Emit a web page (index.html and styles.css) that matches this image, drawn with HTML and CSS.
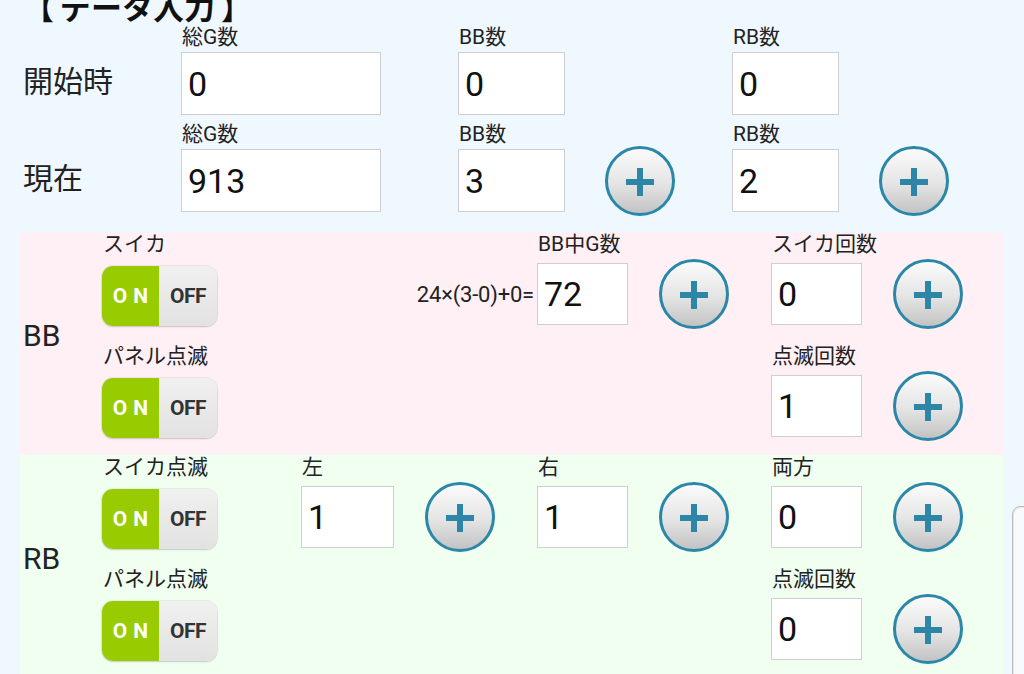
FILE: index.html
```html
<!DOCTYPE html>
<html lang="ja">
<head>
<meta charset="utf-8">
<title>データ入力</title>
<link rel="stylesheet" href="styles.css">
</head>
<body>
<div class="page">
  <h1 class="title"><span class="br-open">【</span>データ入力<span class="br-close">】</span></h1>

  <div class="top-row first">
    <div class="row-label">開始時</div>
    <div class="field">
      <div class="flabel">総G数</div>
      <div class="fbody"><input class="num wide" value="0"></div>
    </div>
    <div class="field">
      <div class="flabel">BB数</div>
      <div class="fbody"><input class="num mid" value="0"></div>
    </div>
    <div class="field">
      <div class="flabel">RB数</div>
      <div class="fbody"><input class="num mid" value="0"></div>
    </div>
  </div>

  <div class="top-row second">
    <div class="row-label">現在</div>
    <div class="field">
      <div class="flabel">総G数</div>
      <div class="fbody"><input class="num wide" value="913"></div>
    </div>
    <div class="field">
      <div class="flabel">BB数</div>
      <div class="fbody"><input class="num mid" value="3"><button class="plus top-plus"><svg viewBox="0 0 28 28" width="28" height="28"><rect x="0" y="11" width="28" height="6" fill="#2d86a5"/><rect x="11" y="0" width="6" height="28" fill="#2d86a5"/></svg></button></div>
    </div>
    <div class="field">
      <div class="flabel">RB数</div>
      <div class="fbody"><input class="num mid" value="2"><button class="plus top-plus"><svg viewBox="0 0 28 28" width="28" height="28"><rect x="0" y="11" width="28" height="6" fill="#2d86a5"/><rect x="11" y="0" width="6" height="28" fill="#2d86a5"/></svg></button></div>
    </div>
  </div>

  <section class="bonus bb">
    <div class="bonus-label">BB</div>

    <div class="cell c2 r1">
      <div class="clabel">スイカ</div>
      <div class="cbody"><div class="toggle"><span class="on">ON</span><span class="off">OFF</span></div></div>
    </div>
    <div class="formula c3 r1">24×(3-0)+0=</div>
    <div class="cell c4 r1">
      <div class="clabel">BB中G数</div>
      <div class="cbody"><input class="num small" value="72"><button class="plus"><svg viewBox="0 0 28 28" width="28" height="28"><rect x="0" y="11" width="28" height="6" fill="#2d86a5"/><rect x="11" y="0" width="6" height="28" fill="#2d86a5"/></svg></button></div>
    </div>
    <div class="cell c5 r1">
      <div class="clabel">スイカ回数</div>
      <div class="cbody"><input class="num small" value="0"><button class="plus"><svg viewBox="0 0 28 28" width="28" height="28"><rect x="0" y="11" width="28" height="6" fill="#2d86a5"/><rect x="11" y="0" width="6" height="28" fill="#2d86a5"/></svg></button></div>
    </div>

    <div class="cell c2 r2">
      <div class="clabel">パネル点滅</div>
      <div class="cbody"><div class="toggle"><span class="on">ON</span><span class="off">OFF</span></div></div>
    </div>
    <div class="cell c5 r2">
      <div class="clabel">点滅回数</div>
      <div class="cbody"><input class="num small" value="1"><button class="plus"><svg viewBox="0 0 28 28" width="28" height="28"><rect x="0" y="11" width="28" height="6" fill="#2d86a5"/><rect x="11" y="0" width="6" height="28" fill="#2d86a5"/></svg></button></div>
    </div>
  </section>

  <section class="bonus rb">
    <div class="bonus-label">RB</div>

    <div class="cell c2 r1">
      <div class="clabel">スイカ点滅</div>
      <div class="cbody"><div class="toggle"><span class="on">ON</span><span class="off">OFF</span></div></div>
    </div>
    <div class="cell c3 r1">
      <div class="clabel">左</div>
      <div class="cbody"><input class="num left" value="1"><button class="plus"><svg viewBox="0 0 28 28" width="28" height="28"><rect x="0" y="11" width="28" height="6" fill="#2d86a5"/><rect x="11" y="0" width="6" height="28" fill="#2d86a5"/></svg></button></div>
    </div>
    <div class="cell c4 r1">
      <div class="clabel">右</div>
      <div class="cbody"><input class="num small" value="1"><button class="plus"><svg viewBox="0 0 28 28" width="28" height="28"><rect x="0" y="11" width="28" height="6" fill="#2d86a5"/><rect x="11" y="0" width="6" height="28" fill="#2d86a5"/></svg></button></div>
    </div>
    <div class="cell c5 r1">
      <div class="clabel">両方</div>
      <div class="cbody"><input class="num small" value="0"><button class="plus"><svg viewBox="0 0 28 28" width="28" height="28"><rect x="0" y="11" width="28" height="6" fill="#2d86a5"/><rect x="11" y="0" width="6" height="28" fill="#2d86a5"/></svg></button></div>
    </div>

    <div class="cell c2 r2">
      <div class="clabel">パネル点滅</div>
      <div class="cbody"><div class="toggle"><span class="on">ON</span><span class="off">OFF</span></div></div>
    </div>
    <div class="cell c5 r2">
      <div class="clabel">点滅回数</div>
      <div class="cbody"><input class="num small" value="0"><button class="plus"><svg viewBox="0 0 28 28" width="28" height="28"><rect x="0" y="11" width="28" height="6" fill="#2d86a5"/><rect x="11" y="0" width="6" height="28" fill="#2d86a5"/></svg></button></div>
    </div>
  </section>

  <div class="side-panel"></div>
</div>
</body>
</html>
```
FILE: styles.css
```css
html, body {
  margin: 0;
  padding: 0;
}
body {
  background: #f0f8ff;
  font-family: Roboto, "Noto Sans CJK JP", sans-serif;
  color: #222;
  width: 1024px;
  height: 674px;
  overflow: hidden;
}
.page {
  position: relative;
  width: 1024px;
  height: 674px;
  overflow: hidden;
}
.title {
  margin: -9px 0 -2px 23px;
  font-size: 31px;
  line-height: 36px;
  height: 36px;
  font-weight: bold;
  color: #111;
  white-space: nowrap;
}
.br-open {
  margin-right: 6px;
}
.br-close {
  margin-left: 6px;
}

/* top rows */
.top-row {
  display: grid;
  grid-template-columns: 181px 277px 274px 1fr;
}
.top-row.second {
  margin-top: 7px;
}
.row-label {
  padding-left: 23px;
  padding-top: 27px;
  height: 63px;
  line-height: 60px;
  font-size: 30px;
  color: #222;
}
.flabel {
  height: 24px;
  line-height: 24px;
  font-size: 21px;
  color: #222;
  padding-left: 1px;
}
.fbody {
  margin-top: 3px;
  height: 63px;
  display: flex;
  align-items: center;
}

/* inputs */
.num {
  box-sizing: border-box;
  height: 62px;
  border: 1px solid #cfcfcf;
  background: #fff;
  font-family: Roboto, "Noto Sans CJK JP", sans-serif;
  font-size: 34px;
  color: #111;
  padding: 0 0 0 6px;
  margin: 0;
  outline: none;
  border-radius: 0;
}
.fbody .num { height: 63px; }
.num.wide { width: 200px; }
.num.mid { width: 107px; }
.num.small { width: 91px; }
.num.left { width: 93px; }

/* plus buttons */
.plus {
  box-sizing: border-box;
  width: 70px;
  height: 70px;
  flex: none;
  border-radius: 50%;
  border: 3px solid #2b87a8;
  background: linear-gradient(#fbfbfb, #e4e4e4 55%, #c3c3c3);
  margin-left: 31px;
  padding: 0;
  display: flex;
  align-items: center;
  justify-content: center;
  padding-top: 2px;
}
.plus.top-plus {
  margin-left: 40px;
}

/* bonus sections */
.bonus {
  display: grid;
  grid-template-columns: 82px 199px 236px 234px 1fr;
  grid-template-rows: 100px 100px;
  row-gap: 12px;
  width: 983px;
  margin-left: 20px;
}
.bonus.bb {
  background: #fff0f5;
  margin-top: 20px;
  padding-bottom: 11px;
}
.bonus.rb {
  background: #f0fff0;
  padding-bottom: 20px;
}
.bonus-label {
  grid-column: 1;
  grid-row: 1 / 3;
  align-self: center;
  padding-left: 3px;
  font-size: 30px;
  color: #222;
  margin-top: -6px;
}
.c2 { grid-column: 2; }
.c3 { grid-column: 3; }
.c4 { grid-column: 4; }
.c5 { grid-column: 5; }
.r1 { grid-row: 1; }
.r2 { grid-row: 2; }

.clabel {
  height: 24px;
  line-height: 24px;
  font-size: 21px;
  color: #222;
  padding-left: 1px;
  white-space: nowrap;
}
.cbody {
  height: 76px;
  display: flex;
  align-items: center;
}
.formula {
  padding-top: 24px;
  height: 76px;
  display: flex;
  align-items: center;
  justify-content: flex-end;
  padding-right: 3px;
  font-size: 22px;
  letter-spacing: -0.2px;
  color: #222;
  white-space: nowrap;
}

/* toggle */
.toggle {
  display: flex;
  width: 115px;
  height: 60px;
  margin-top: 4px;
  border-radius: 11px;
  overflow: hidden;
  box-shadow: 0 0 0 1px rgba(0,0,0,0.06), 0 1px 2px rgba(0,0,0,0.15);
  font-family: Roboto, sans-serif;
  font-weight: bold;
  font-size: 21px;
}
.toggle .on {
  width: 57px;
  background: #99cc00;
  color: #fff;
  display: flex;
  align-items: center;
  justify-content: center;
  letter-spacing: 6px;
  padding-left: 6px;
  box-sizing: border-box;
}
.toggle .off {
  flex: 1;
  background: linear-gradient(#f0f0f0, #e2e2e2);
  color: #333;
  display: flex;
  align-items: center;
  justify-content: center;
  letter-spacing: -0.5px;
}

/* partially visible side panel at the right edge */
.side-panel {
  position: absolute;
  left: 1012px;
  top: 506px;
  width: 40px;
  height: 220px;
  border: 1px solid #bcbcbc;
  border-radius: 8px;
  background: #f8fafc;
  box-shadow: inset 1px 1px 0 #e6e6e6;
}
```
